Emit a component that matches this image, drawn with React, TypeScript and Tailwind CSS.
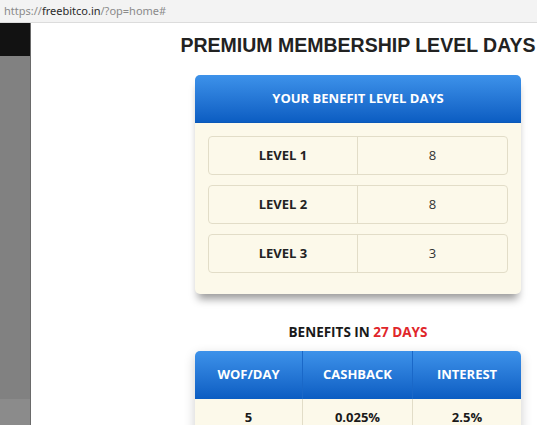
const levels = [
	{ label: "LEVEL 1", days: 8 },
	{ label: "LEVEL 2", days: 8 },
	{ label: "LEVEL 3", days: 3 },
];

const benefits = [
	{ head: "WOF/DAY", value: "5" },
	{ head: "CASHBACK", value: "0.025%" },
	{ head: "INTEREST", value: "2.5%" },
];

export default function App() {
	return (
		<div className="flex h-[425px] w-[537px] flex-col overflow-hidden bg-white">
			<div
				className="flex h-[23px] shrink-0 items-center border-b border-[#dcdcdc] bg-[#f3f3f3] pl-[4px] text-[11px] text-[#8a8a8a]"
				style={{ fontFamily: '"Noto Sans", "Open Sans", sans-serif' }}
			>
				<span>https://</span>
				<span className="text-[#2a2a2a]">freebitco.in</span>
				<span>/?op=home#</span>
			</div>

			<div className="flex min-h-0 flex-1">
				<aside className="flex w-[31px] shrink-0 flex-col border-r border-[#6a6a6a]">
					<div className="h-[33px] bg-[#121212]" />
					<div className="flex-1 bg-[#818181]" />
					<div className="h-[26px] bg-[#8b8b8b]" />
				</aside>

				<main className="min-w-0 flex-1 overflow-hidden">
					<div className="ml-[147px] w-[360px]">
						<h1
							className="mt-[11px] whitespace-nowrap text-center text-[19.5px] font-bold leading-[22px] text-[#222]"
							style={{ fontFamily: '"Liberation Sans", Arial, sans-serif' }}
						>
							PREMIUM MEMBERSHIP LEVEL DAYS
						</h1>

						<div
							className="mx-auto mt-[19px] w-[326px]"
							style={{ fontFamily: '"Open Sans", sans-serif' }}
						>
							<section className="overflow-hidden rounded-[5px] bg-[#fcf9ea] shadow-[0_8px_9px_-3px_rgba(0,0,0,0.4)]">
								<div className="flex h-[48px] items-center justify-center border-b border-[#0a58b8] bg-gradient-to-b from-[#3d92ea] to-[#0b5dc2] text-[13px] font-bold text-white">
									YOUR BENEFIT LEVEL DAYS
								</div>
								<div className="flex flex-col gap-[10px] px-[13px] pb-[21px] pt-[13px]">
									{levels.map((row) => (
										<div
											key={row.label}
											className="flex h-[39px] items-center rounded-[4px] border border-[#e2ddc8] text-[13px] text-[#222]"
										>
											<div className="flex h-full w-1/2 items-center justify-center border-r border-[#e2ddc8] font-bold">
												{row.label}
											</div>
											<div className="flex h-full w-1/2 items-center justify-center text-[#333]">
												{row.days}
											</div>
										</div>
									))}
								</div>
							</section>

							<p className="mt-[29px] text-center text-[13.5px] font-bold leading-[18px] text-[#1a1a1a]">
								BENEFITS IN <span className="text-[#e0262a]">27 DAYS</span>
							</p>

							<section className="mt-[10px] overflow-hidden rounded-t-[5px] bg-[#fcf9ea] shadow-[0_4px_12px_rgba(0,0,0,0.2)]">
								<div className="grid grid-cols-[108px_110px_1fr]">
									{benefits.map((b, i) => (
										<div
											key={b.head}
											className={`flex h-[48px] items-center justify-center bg-gradient-to-b from-[#3d92ea] to-[#0b5dc2] text-[13px] font-bold text-white ${i < 2 ? "border-r border-[#1a68c8]" : ""}`}
										>
											{b.head}
										</div>
									))}
									{benefits.map((b, i) => (
										<div
											key={b.value}
											className={`flex h-[38px] items-center justify-center text-[13px] font-bold text-[#1a1a1a] ${i < 2 ? "border-r border-[#e2ddc8]" : ""}`}
										>
											{b.value}
										</div>
									))}
								</div>
							</section>
						</div>
					</div>
				</main>
			</div>
		</div>
	);
}
